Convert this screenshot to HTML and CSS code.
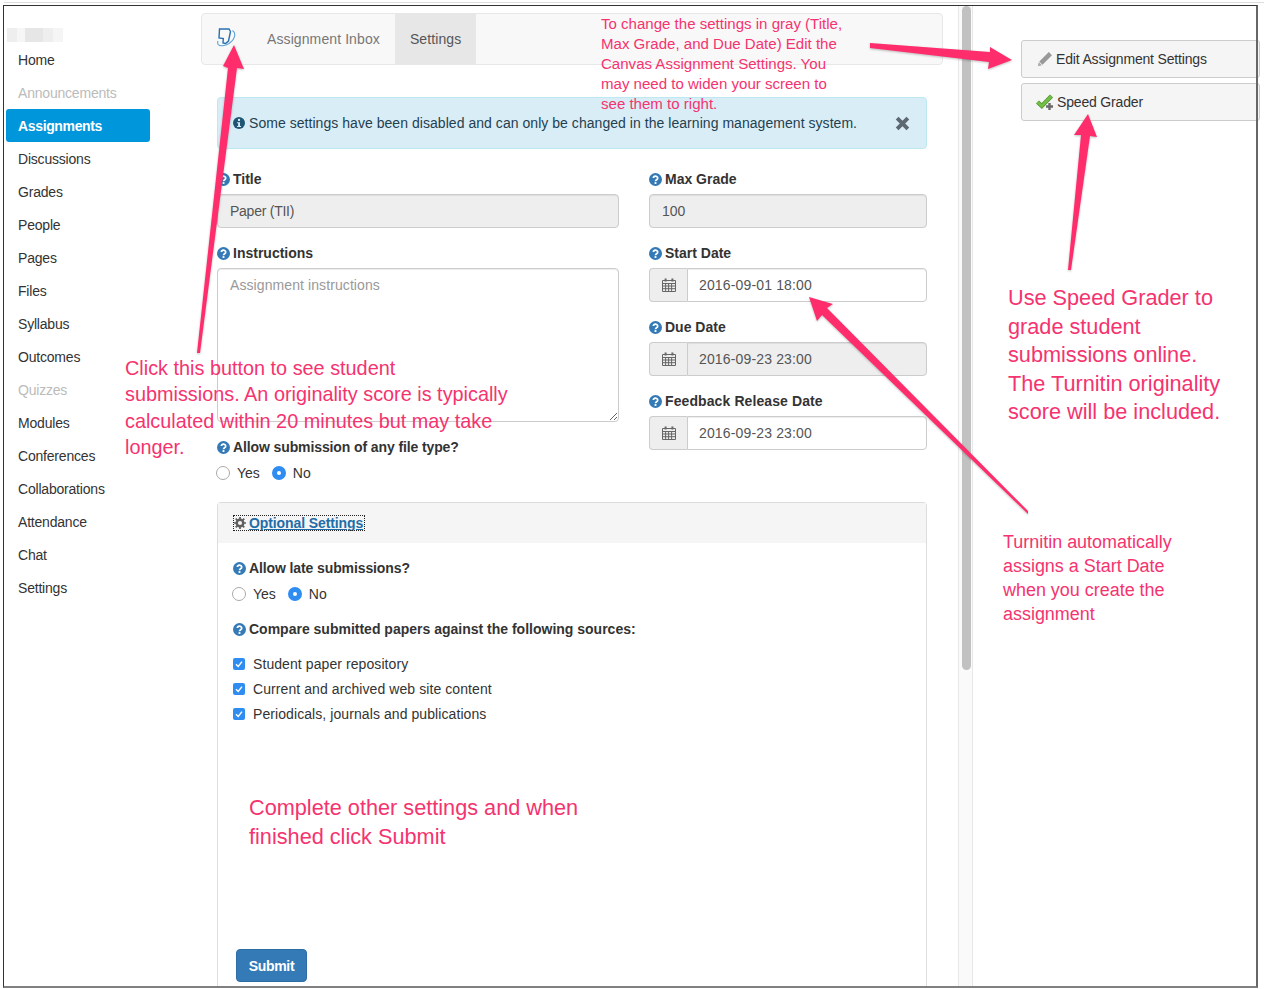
FILE: index.html
```html
<!DOCTYPE html>
<html lang="en">
<head>
    <meta charset="UTF-8">
    <title>Turnitin Assignment Settings</title>
    <link rel="stylesheet" href="styles.css">
</head>
<body>
    <svg class="icon-defs" width="0" height="0">
        <symbol id="i-help" viewBox="0 0 14 14">
            <circle cx="7" cy="7" r="7" fill="currentColor"/>
            <path d="M4.600 5.400a2.400 2.100 0 1 1 3.600 1.900c-.8.500-1.200.8-1.200 1.600" fill="none" stroke="#fff" stroke-width="1.800"/>
            <rect x="6" y="9.800" width="2" height="2" fill="#fff"/>
        </symbol>
        <symbol id="i-cal" viewBox="0 0 14 14">
            <path d="M.5 2.500h13v11H.5zM.5 5.500h13M.5 8h13M.5 10.700h13M3.600 5.500v8M6.600 5.500v8M9.600 5.500v8" fill="none" stroke="currentColor"/>
            <path d="M3.600 .5v3M10.400 .5v3" fill="none" stroke="currentColor" stroke-width="2"/>
        </symbol>
        <symbol id="i-check" viewBox="0 0 12 12">
            <rect width="12" height="12" rx="2" fill="#2f8df2"/>
            <path d="M3 6.200l2.200 2.300L9 3.600" fill="none" stroke="#fff" stroke-width="1.400"/>
        </symbol>
    </svg>

    <div class="frame">
        <nav class="sidebar">
            <div class="course-name"></div>
            <a class="nav-item">Home</a>
            <a class="nav-item is-disabled">Announcements</a>
            <a class="nav-item is-active">Assignments</a>
            <a class="nav-item">Discussions</a>
            <a class="nav-item">Grades</a>
            <a class="nav-item">People</a>
            <a class="nav-item">Pages</a>
            <a class="nav-item">Files</a>
            <a class="nav-item">Syllabus</a>
            <a class="nav-item">Outcomes</a>
            <a class="nav-item is-disabled">Quizzes</a>
            <a class="nav-item">Modules</a>
            <a class="nav-item">Conferences</a>
            <a class="nav-item">Collaborations</a>
            <a class="nav-item">Attendance</a>
            <a class="nav-item">Chat</a>
            <a class="nav-item">Settings</a>
        </nav>

        <main class="main">
            <div class="tabbar">
                <svg class="tii-logo" viewBox="0 0 20 20" width="20" height="20">
                    <path d="M2.500 1h9.500l1.500 2.500-2 9.500-3 2.500-2.500-.5.300-4.500-4.300-.5z" fill="none" stroke="#2a6fb0" stroke-width="1.400"/>
                    <path d="M15.500 2.500c4 2.500 2.500 9-3.500 13-4 2.500-9 3.200-10.800 1-.7-1-.7-2.200-.2-3.500" fill="none" stroke="#5a9fd8" stroke-width="1.100"/>
                </svg>
                <a class="tab">Assignment Inbox</a>
                <a class="tab is-current">Settings</a>
            </div>

            <div class="content">
                <div class="alert">
                    <svg class="alert-icon" viewBox="0 0 14 14" width="12" height="12">
                        <circle cx="7" cy="7" r="7" fill="#1f5673"/>
                        <rect x="5.800" y="2.200" width="2.400" height="2.400" fill="#d9edf7"/>
                        <path d="M4.800 6h3.400v4.500h1.200v1.300H4.800v-1.300H6V7.300H4.800z" fill="#d9edf7"/>
                    </svg>
                    <span class="alert-text">Some settings have been disabled and can only be changed in the learning management system.</span>
                    <svg class="alert-close" viewBox="0 0 14 14" width="15" height="15">
                        <path d="M2 2l10 10M12 2L2 12" stroke="#5d6873" stroke-width="3.600" fill="none"/>
                    </svg>
                </div>

                <div class="form-grid">
                    <div class="form-col">
                        <div class="field">
                            <label class="field-label"><svg class="help"><use href="#i-help"/></svg>Title</label>
                            <input class="input input-title" value="Paper (TII)" disabled>
                        </div>
                        <div class="field">
                            <label class="field-label"><svg class="help"><use href="#i-help"/></svg>Instructions</label>
                            <textarea class="input textarea" placeholder="Assignment instructions"></textarea>
                        </div>
                        <div class="field-label is-tight"><svg class="help"><use href="#i-help"/></svg>Allow submission of any file type?</div>
                        <div class="radio-row outdent">
                            <span class="radio"></span><span class="radio-text">Yes</span>
                            <span class="radio is-on"></span><span class="radio-text">No</span>
                        </div>
                    </div>
                    <div class="form-col">
                        <div class="field">
                            <label class="field-label"><svg class="help"><use href="#i-help"/></svg>Max Grade</label>
                            <input class="input" value="100" disabled>
                        </div>
                        <div class="field">
                            <label class="field-label"><svg class="help"><use href="#i-help"/></svg>Start Date</label>
                            <div class="date-group">
                                <span class="addon"><svg class="cal"><use href="#i-cal"/></svg></span>
                                <input class="input date-input" value="2016-09-01 18:00">
                            </div>
                        </div>
                        <div class="field">
                            <label class="field-label"><svg class="help"><use href="#i-help"/></svg>Due Date</label>
                            <div class="date-group">
                                <span class="addon"><svg class="cal"><use href="#i-cal"/></svg></span>
                                <input class="input date-input" value="2016-09-23 23:00" disabled>
                            </div>
                        </div>
                        <div class="field">
                            <label class="field-label is-wide"><svg class="help"><use href="#i-help"/></svg>Feedback Release Date</label>
                            <div class="date-group">
                                <span class="addon"><svg class="cal"><use href="#i-cal"/></svg></span>
                                <input class="input date-input" value="2016-09-23 23:00">
                            </div>
                        </div>
                    </div>
                </div>

                <section class="panel">
                    <div class="panel-head">
                        <a class="panel-link">
                            <svg class="gear" viewBox="0 0 14 14" width="12" height="12">
                                <circle cx="7" cy="7" r="3.800" fill="none" stroke="#5f5f5f" stroke-width="2.800"/>
                                <path d="M7 0v3M7 11v3M0 7h3M11 7h3M2 2l2 2M10 10l2 2M12 2l-2 2M4 10l-2 2" stroke="#5f5f5f" stroke-width="2"/>
                            </svg>
                            <span class="panel-title">Optional Settings</span>
                        </a>
                    </div>
                    <div class="panel-body">
                        <div class="field-label is-tight"><svg class="help"><use href="#i-help"/></svg>Allow late submissions?</div>
                        <div class="radio-row">
                            <span class="radio"></span><span class="radio-text">Yes</span>
                            <span class="radio is-on"></span><span class="radio-text">No</span>
                        </div>
                        <div class="field-label sources-label"><svg class="help"><use href="#i-help"/></svg>Compare submitted papers against the following sources:</div>
                        <ul class="check-list">
                            <li><svg class="check"><use href="#i-check"/></svg>Student paper repository</li>
                            <li><svg class="check"><use href="#i-check"/></svg>Current and archived web site content</li>
                            <li><svg class="check"><use href="#i-check"/></svg>Periodicals, journals and publications</li>
                        </ul>
                        <button class="submit">Submit</button>
                    </div>
                </section>
            </div>
        </main>

        <div class="scroll-track"><div class="scroll-thumb"></div></div>

        <aside class="side-pane">
            <a class="side-btn">
                <svg class="side-icon" viewBox="0 0 16 16" width="16" height="16">
                    <path d="M11.800 1l3.200 3.200-9.500 9.500-3.200-3.200z" fill="#999"/>
                    <path d="M1.800 11l3.200 3.200-4.200 1z" fill="#aaa"/>
                </svg>
                Edit Assignment Settings
            </a>
            <a class="side-btn">
                <svg class="side-icon grader-icon" viewBox="0 0 18 16" width="18" height="16">
                    <path d="M1.500 8l4.300 4L15.500 2" fill="none" stroke="#4f8f35" stroke-width="4.200"/>
                    <path d="M1.500 8l4.300 4L15.500 2" fill="none" stroke="#72c043" stroke-width="2.800"/>
                    <path d="M13.500 9v7M10 12.500h7" stroke="#6a6a6a" stroke-width="2.400"/>
                </svg>
                Speed Grader
            </a>
        </aside>
    </div>

    <!-- annotations drawn over the screenshot -->
    <svg class="arrows" width="1264" height="989" viewBox="0 0 1264 989">
        <polygon points="197,353 228,68 223,66 234,45 244,69 237,68 200,353"/>
        <polygon points="870,43 990,52 990,47 1012,60 988,69 989,62 870,48"/>
        <polygon points="1068,270 1081,135 1074,135 1088,114 1097,137 1090,136 1071,270"/>
        <polygon points="1028,514 822,315 817,321 809,297 833,304 827,308 1028,511"/>
    </svg>
    <p class="note note-top">To change the settings in gray (Title,<br>Max Grade, and Due Date) Edit the<br>Canvas Assignment Settings. You<br>may need to widen your screen to<br>see them to right.</p>
    <p class="note note-click">Click this button to see student<br>submissions. An originality score is typically<br>calculated within 20 minutes but may take<br>longer.</p>
    <p class="note note-grader">Use Speed Grader to<br>grade student<br>submissions online.<br>The Turnitin originality<br>score will be included.</p>
    <p class="note note-start">Turnitin automatically<br>assigns a Start Date<br>when you create the<br>assignment</p>
    <p class="note note-submit">Complete other settings and when<br>finished click Submit</p>
</body>
</html>
```

FILE: styles.css
```css
:root {
    --text: #333;
    --muted: #777;
    --border: #ccc;
    --disabled-bg: #eee;
    --blue: #337ab7;
    --pink: #f5336f;
}

* { box-sizing: border-box; }

body {
    margin: 0;
    height: 989px;
    padding: 5px 6px 1px 3px;
    position: relative;
    overflow: hidden;
    background: #fff;
    color: var(--text);
    font-family: "Liberation Sans", Arial, sans-serif;
    font-size: 14px;
    line-height: 20px;
}

/* thin line above the window */
body::before { content: ""; position: absolute; top: 2px; left: 4px; right: 0; height: 1px; background: #ddd; }

.icon-defs { position: absolute; }

/* --- Window --- */
.frame { position: relative; display: flex; height: 983px; padding: 1px 2px 2px 1px; }
.frame::after {
    content: ""; position: absolute; inset: 0; pointer-events: none;
    border: 1px solid #333; border-right: 2px solid #666; border-bottom: 2px solid #808080;
}

/* --- Course nav --- */
.sidebar { width: 197px; flex: none; padding: 22px 0 0 2px; }
.course-name {
    width: 56px; height: 14px; margin: 0 0 1px 1px;
    background: linear-gradient(90deg, #eee 0 10px, #f6f6f6 10px 18px, #e6e6e6 18px 36px, #eee 36px 46px, #f5f5f5 46px);
}
.nav-item { display: block; width: 144px; height: 33px; padding: 6.500px 12px; border-radius: 3px; letter-spacing: -.2px; }
.nav-item.is-disabled { color: #bbb; }
.nav-item.is-active { background: #0096db; color: #fff; font-weight: 700; letter-spacing: -.35px; }

/* --- Main column --- */
.main { width: 757px; flex: none; padding: 7px 15px 0 0; overflow: hidden; }

.tabbar {
    display: flex; height: 52px; padding-left: 15px;
    background: #f8f8f8; border: 1px solid #e7e7e7; border-radius: 4px;
}
.tii-logo { margin: 14px 15px 0 0; }
.tab { padding: 15px 15px; color: var(--muted); letter-spacing: .1px; }
.tab.is-current { background: #e7e7e7; color: #555; }

.content { margin: 0 16px; }

.alert {
    display: flex; align-items: center; height: 52px; margin-top: 32px; padding: 0 16px 0 15px;
    background: #d9edf7; border: 1px solid #bce8f1; border-radius: 4px;
    color: #24404f; letter-spacing: .045px;
}
.alert-icon { flex: none; margin-right: 4px; }
.alert-text { flex: 1; }
.alert-close { flex: none; }

/* --- Form --- */
.form-grid { display: grid; grid-template-columns: 402px 278px; column-gap: 30px; margin-top: 20px; }
.field { margin-bottom: 15px; }
.field-label { display: block; height: 20px; margin-bottom: 5px; font-weight: 700; }
.field-label.is-tight { letter-spacing: -.11px; }
.field-label.is-wide { letter-spacing: .1px; }
.help { width: 13px; height: 13px; margin-right: 3px; vertical-align: -2px; color: var(--blue); }

.input {
    display: block; width: 100%; height: 34px; padding: 6px 12px;
    background: #fff; border: 1px solid var(--border); border-radius: 4px;
    box-shadow: inset 0 1px 1px rgba(0,0,0,.075);
    color: #555; font: inherit;
}
.input:disabled { background: var(--disabled-bg); color: #555; opacity: 1; -webkit-text-fill-color: #555; }
.input-title { letter-spacing: -.25px; }
.textarea { height: 154px; letter-spacing: .09px; }
.textarea::placeholder { color: #999; }

.date-group { display: flex; }
.addon {
    flex: none; width: 38px; height: 34px; padding: 9px 0 0 12px;
    background: var(--disabled-bg); border: 1px solid var(--border); border-right: 0;
    border-radius: 4px 0 0 4px; color: #666;
}
.cal { display: block; width: 14px; height: 14px; }
.date-input { flex: 1; width: auto; min-width: 0; padding-left: 11px; border-radius: 0 4px 4px 0; letter-spacing: .15px; }

.radio-row { display: flex; align-items: center; height: 20px; margin-top: 6px; }
.radio-row.outdent { margin-left: -1px; }
.radio { flex: none; width: 14px; height: 14px; border: 1px solid #aaa; border-radius: 50%; background: #fff; }
.radio.is-on { border: 5px solid #2f8df2; }
.radio-text { margin: 0 12px 0 7px; }

/* --- Optional settings panel --- */
.panel {
    margin-top: 19px; height: 520px;
    border: 1px solid #ddd; border-bottom: 0; border-radius: 4px 4px 0 0;
}
.panel-head { height: 40px; padding: 13px 16px 0; background: #f5f5f5; }
.panel-link {
    display: flex; align-items: center; width: 130px; height: 14px;
    outline: 1px dotted #222; font-weight: 700; color: #1f6da8; letter-spacing: -.1px;
}
.gear { margin-right: 3px; }
.panel-title { text-decoration: underline; }
.panel-body { padding: 15px 15px 0; }
.panel-body .radio-row { margin-top: 6px; margin-left: -1px; }
.sources-label { margin-top: 15px; }
.check-list { list-style: none; margin: 12px 0 0; padding: 0; letter-spacing: .08px; }
.check-list li { display: flex; align-items: center; height: 25px; }
.check { flex: none; width: 12px; height: 12px; margin-right: 8px; }
.submit {
    display: block; width: 71px; height: 33px; margin: 223px 0 0 3px; padding: 0;
    background: var(--blue); border: 1px solid #2e6da4; border-radius: 4px;
    color: #fff; font: 700 14px "Liberation Sans", Arial, sans-serif; letter-spacing: -.3px;
}

/* --- Scrollbar --- */
.scroll-track { width: 15px; flex: none; padding-left: 3px; background: #fafafa; border: solid #e8e8e8; border-width: 0 1px; }
.scroll-thumb { width: 9px; height: 664px; background: #c1c1c1; border-radius: 5px; }

/* --- Right pane --- */
.side-pane { flex: 1; padding: 34px 0 0 48px; }
.side-btn {
    display: flex; align-items: center; width: 239px; height: 38px; margin-bottom: 5px; padding-left: 15px;
    background: #f5f5f5; border: 1px solid var(--border); border-radius: 3px;
    letter-spacing: -.17px;
}
.side-icon { flex: none; margin-right: 3px; }
.grader-icon { margin-left: -1px; }

/* --- Annotations --- */
.arrows { position: absolute; top: 0; left: 0; pointer-events: none; filter: drop-shadow(0 1px 1px rgba(0,0,0,.25)); }
.arrows polygon { fill: #ff2d6c; }
.note { position: absolute; margin: 0; white-space: nowrap; color: var(--pink); }
.note-top { top: 14px; left: 601px; font-size: 15.050px; line-height: 19.900px; }
.note-click { top: 355px; left: 125px; font-size: 19.850px; line-height: 26.400px; }
.note-grader { top: 284px; left: 1008px; font-size: 21.700px; line-height: 28.500px; }
.note-start { top: 530px; left: 1003px; font-size: 17.950px; line-height: 24px; }
.note-submit { top: 793px; left: 249px; font-size: 21.700px; line-height: 29px; }
```
